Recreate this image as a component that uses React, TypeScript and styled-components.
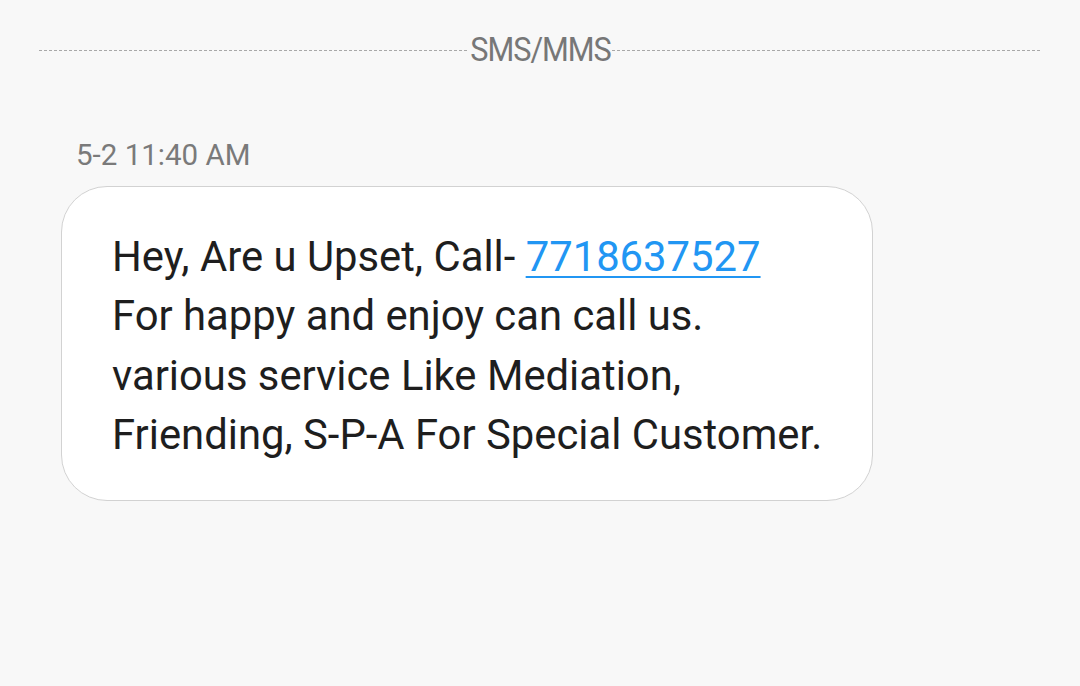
import React from "react";
import styled, { createGlobalStyle } from "styled-components";

const Global = createGlobalStyle`
  html, body { margin: 0; padding: 0; background: #f8f8f8; }
  body { font-family: Roboto, "Noto Sans", sans-serif; -webkit-font-smoothing: antialiased; }
`;

const Page = styled.div`
  width: 1080px;
  height: 686px;
  background: #f8f8f8;
  display: flex;
  flex-direction: column;
  overflow: hidden;
`;

const Divider = styled.div`
  display: flex;
  align-items: center;
  padding: 35px 39px 0 39px;
  height: 30px;
`;

const Dash = styled.div`
  flex: 1;
  height: 1px;
  background-image: repeating-linear-gradient(
    to right,
    #a8a8a8 0px,
    #a8a8a8 3px,
    transparent 3px,
    transparent 5px
  );
`;

const DividerLabel = styled.span`
  font-family: Roboto, sans-serif;
  font-size: 33px;
  line-height: 30px;
  color: #777777;
  display: flex;
  justify-content: center;
  width: 143px;
  white-space: nowrap;
  letter-spacing: -1.1px;
  transform: scaleX(0.93);
  transform-origin: center;
`;

const Thread = styled.div`
  display: flex;
  flex-direction: column;
  align-items: flex-start;
  padding: 74px 0 0 61px;
`;

const Timestamp = styled.div`
  font-size: 29.5px;
  color: #7a7a7a;
  padding-left: 15px;
  line-height: 32px;
  margin-bottom: 15px;
`;

const Bubble = styled.div`
  box-sizing: border-box;
  width: 812px;
  height: 315px;
  background: #ffffff;
  border: 1px solid #d2d2d2;
  border-radius: 46px;
  padding: 40px 30px 0 50px;
`;

const MessageText = styled.p`
  margin: 0;
  font-size: 41.8px;
  line-height: 59.3px;
  color: #1e1e1e;
  white-space: nowrap;
`;

const Link = styled.a`
  color: #2196f3;
  text-decoration: underline;
  text-decoration-thickness: 2px;
  text-underline-offset: 5px;
`;

export default function App() {
  return (
    <Page>
      <Global />
      <Divider>
        <Dash />
        <DividerLabel>SMS/MMS</DividerLabel>
        <Dash />
      </Divider>
      <Thread>
        <Timestamp>5-2 11:40 AM</Timestamp>
        <Bubble>
          <MessageText>
            Hey, Are u Upset, Call- <Link href="#">7718637527</Link>
            <br />
            For happy and enjoy can call us.
            <br />
            various service Like Mediation,
            <br />
            Friending, S-P-A For Special Customer.
          </MessageText>
        </Bubble>
      </Thread>
    </Page>
  );
}
